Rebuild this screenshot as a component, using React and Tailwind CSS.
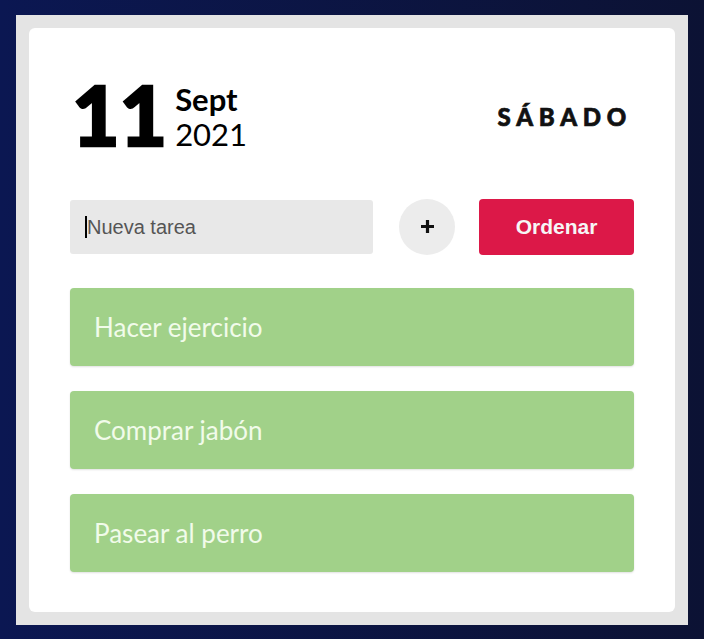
import React, { useState } from 'react';

const tareasIniciales = ['Hacer ejercicio', 'Comprar jabón', 'Pasear al perro'];

const App = () => {
    const [tareas] = useState(tareasIniciales);
    const [texto, setTexto] = useState('');

    return (
        <div className="min-h-screen bg-gradient-to-r from-[#0b1752] to-[#0c1234] pl-[16px] pr-[16px] pt-[15px] pb-[13px]">
            <div className="bg-[#e4e4e4] p-[13px]">
                <div className="bg-white rounded-md px-[41px] pt-[45px] pb-[40px] font-['Lato',sans-serif]">
                    {/* Fecha */}
                    <div className="flex items-start justify-between">
                        <div className="flex items-start">
                            <span className="ml-[2px] text-[82px] leading-none font-black text-black [-webkit-text-stroke:2.5px_black]">11</span>
                            <div className="flex flex-col mt-[9px] ml-[8px] text-black">
                                <span className="text-[31px] leading-[35px] font-bold">Sept</span>
                                <span className="text-[31px] leading-[35px]">2021</span>
                            </div>
                        </div>
                        <span className="mt-[32px] mr-[2px] text-[24px] leading-none font-black tracking-[0.24em] text-[#111] [-webkit-text-stroke:0.7px_#111]">SÁBADO</span>
                    </div>

                    {/* Nueva tarea */}
                    <div className="flex items-center mt-[44px] h-[55px]">
                        <div className="flex items-center w-[303px] h-[54px] bg-[#e8e8e8] rounded-[3px] pl-[15px]">
                            <span className="w-[2px] h-[22px] bg-black" />
                            <input
                                type="text"
                                value={texto}
                                onChange={(e) => setTexto(e.target.value)}
                                placeholder="Nueva tarea"
                                className="flex-1 bg-transparent outline-none text-[20px] text-[#333] placeholder:text-[#555] font-['Liberation_Sans',Arial,sans-serif]"
                            />
                        </div>
                        <button className="ml-[26px] w-[56px] h-[56px] rounded-full bg-[#ececec] flex items-center justify-center">
                            <svg width="15" height="15" viewBox="0 0 15 15">
                                <path d="M7.5 1v13M1 7.5h13" stroke="#111" strokeWidth="3.2" />
                            </svg>
                        </button>
                        <button className="ml-[24px] flex-1 h-[56px] rounded-[4px] bg-[#dc1848] text-[#f6f6f6] text-[21px] font-bold font-['Liberation_Sans',Arial,sans-serif]">
                            Ordenar
                        </button>
                    </div>

                    {/* Lista */}
                    <div className="flex flex-col gap-[25px] mt-[34px]">
                        {tareas.map((t) => (
                            <div key={t} className="h-[78px] flex items-center pl-[24px] bg-[#a1d189] rounded-[4px] shadow-[0_1px_2px_rgba(0,0,0,0.12)]">
                                <span className="text-[26px] text-[#f1fbea]">{t}</span>
                            </div>
                        ))}
                    </div>
                </div>
            </div>
        </div>
    );
};

export default App;
